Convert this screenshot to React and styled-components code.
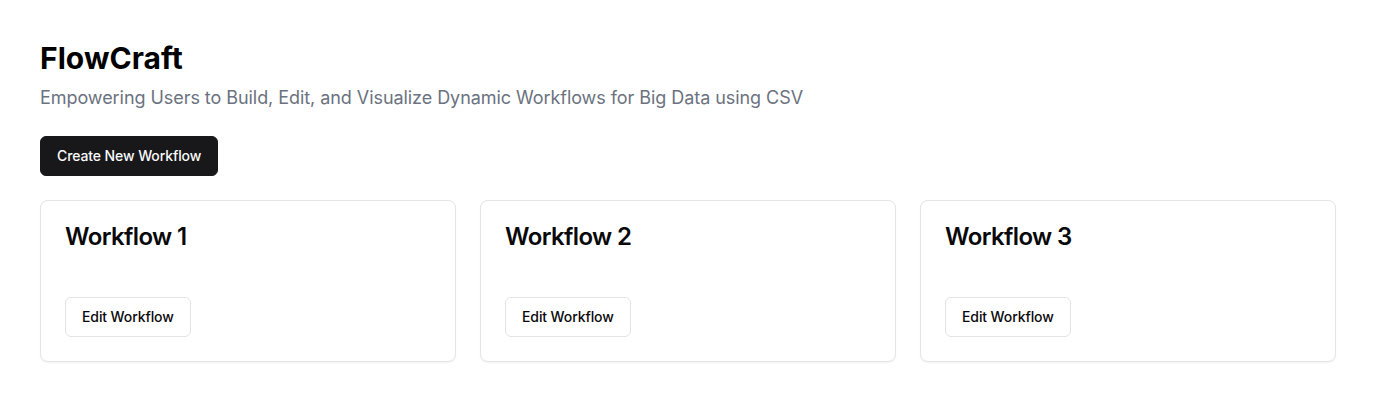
import React from "react";
import styled, { createGlobalStyle } from "styled-components";

const GlobalStyle = createGlobalStyle`
	* {
		box-sizing: border-box;
	}
	body {
		margin: 0;
		background: #ffffff;
		font-family: Inter, "Noto Sans", sans-serif;
		color: #09090b;
	}
`;

const Page = styled.div`
	padding: 40px;
`;

const Title = styled.h1`
	margin: 0;
	font-size: 30px;
	line-height: 36px;
	font-weight: 700;
	letter-spacing: 0.05px;
	color: #000;
`;

const Subtitle = styled.p`
	margin: 8px 0 24px;
	font-size: 18px;
	line-height: 28px;
	letter-spacing: -0.06px;
	color: #6b7280;
`;

const Button = styled.button`
	display: inline-flex;
	align-items: center;
	justify-content: center;
	height: 40px;
	padding: 0 16px;
	border-radius: 6px;
	font-family: inherit;
	font-size: 14px;
	line-height: 20px;
	font-weight: 500;
	letter-spacing: -0.1px;
	cursor: pointer;
	background: ${(p) => (p.$outline ? "#ffffff" : "#18181b")};
	color: ${(p) => (p.$outline ? "#09090b" : "#fafafa")};
	border: 1px solid ${(p) => (p.$outline ? "#e4e4e7" : "#18181b")};
`;

const Grid = styled.div`
	display: grid;
	grid-template-columns: repeat(3, 1fr);
	gap: 24px;
	margin-top: 24px;
`;

const Card = styled.div`
	border: 1px solid #e4e4e7;
	border-radius: 8px;
	background: #fff;
	box-shadow: 0 1px 2px rgba(0, 0, 0, 0.05);
`;

const CardHeader = styled.div`
	padding: 24px;
`;

const CardTitle = styled.h3`
	margin: 0;
	font-size: 24px;
	line-height: 24px;
	font-weight: 600;
	letter-spacing: -0.6px;
`;

const CardFooter = styled.div`
	display: flex;
	align-items: center;
	padding: 24px;
`;

const workflows = ["Workflow 1", "Workflow 2", "Workflow 3"];

const App = () => {
	return (
		<>
			<GlobalStyle />
			<Page>
				<Title>FlowCraft</Title>
				<Subtitle>
					Empowering Users to Build, Edit, and Visualize Dynamic Workflows for
					Big Data using CSV
				</Subtitle>
				<Button>Create New Workflow</Button>
				<Grid>
					{workflows.map((name) => (
						<Card key={name}>
							<CardHeader>
								<CardTitle>{name}</CardTitle>
							</CardHeader>
							<CardFooter>
								<Button $outline>Edit Workflow</Button>
							</CardFooter>
						</Card>
					))}
				</Grid>
			</Page>
		</>
	);
};

export default App;
